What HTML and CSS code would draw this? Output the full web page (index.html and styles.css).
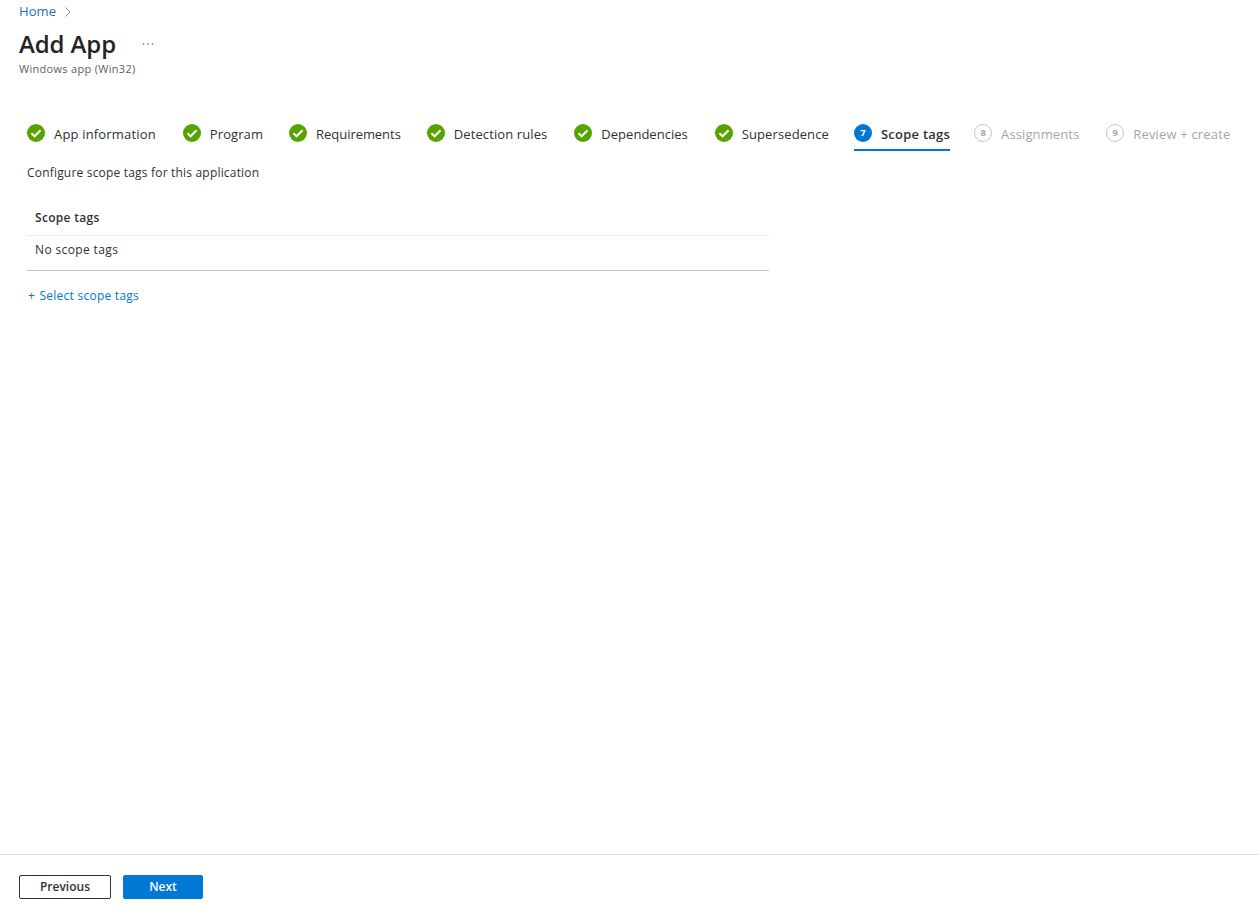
FILE: index.html
```html
<!DOCTYPE html>
<html lang="en">
<head>
<meta charset="utf-8">
<title>Add App</title>
<link rel="stylesheet" href="styles.css">
</head>
<body>
<div class="page">
  <header class="header">
    <nav class="crumbs"><a class="crumb-link">Home</a>
      <svg class="crumb-chevron" width="8" height="12" viewBox="0 0 8 12"><path d="M1.5 1.5 6 6l-4.5 4.5" fill="none" stroke="#8a8886" stroke-width="1"/></svg>
    </nav>
    <div class="title-row"><h1 class="title">Add App</h1><span class="more">
      <svg width="12" height="4" viewBox="0 0 12 4"><circle cx="1.5" cy="2" r=".8"/><circle cx="6" cy="2" r=".8"/><circle cx="10.5" cy="2" r=".8"/></svg></span></div>
    <div class="subtitle">Windows app (Win32)</div>
  </header>
  <ol class="steps">
    <li class="step"><svg class="check" viewBox="0 0 18 18"><circle cx="9" cy="9" r="9"/><path d="M4.5 9.3 7.6 12.3 13.5 6.2"/></svg><span>App information</span></li>
    <li class="step"><svg class="check" viewBox="0 0 18 18"><circle cx="9" cy="9" r="9"/><path d="M4.5 9.3 7.6 12.3 13.5 6.2"/></svg><span>Program</span></li>
    <li class="step"><svg class="check" viewBox="0 0 18 18"><circle cx="9" cy="9" r="9"/><path d="M4.5 9.3 7.6 12.3 13.5 6.2"/></svg><span>Requirements</span></li>
    <li class="step"><svg class="check" viewBox="0 0 18 18"><circle cx="9" cy="9" r="9"/><path d="M4.5 9.3 7.6 12.3 13.5 6.2"/></svg><span>Detection rules</span></li>
    <li class="step"><svg class="check" viewBox="0 0 18 18"><circle cx="9" cy="9" r="9"/><path d="M4.5 9.3 7.6 12.3 13.5 6.2"/></svg><span>Dependencies</span></li>
    <li class="step"><svg class="check" viewBox="0 0 18 18"><circle cx="9" cy="9" r="9"/><path d="M4.5 9.3 7.6 12.3 13.5 6.2"/></svg><span>Supersedence</span></li>
    <li class="step active"><i class="num">7</i><span>Scope tags</span></li>
    <li class="step todo"><i class="num">8</i><span>Assignments</span></li>
    <li class="step todo"><i class="num">9</i><span>Review + create</span></li>
  </ol>
  <main class="content">
    <p class="intro">Configure scope tags for this application</p>
    <div class="table">
      <div class="th">Scope tags</div>
      <div class="td">No scope tags</div>
    </div>
    <a class="add-link"><span class="plus">+</span> Select scope tags</a>
  </main>
  <footer class="footer">
    <button class="btn btn-secondary">Previous</button>
    <button class="btn btn-primary">Next</button>
  </footer>
</div>
</body>
</html>
```
FILE: styles.css
```css
* { box-sizing: border-box; }
html, body { margin: 0; padding: 0; }
body { font-family: "Open Sans", "Noto Sans", sans-serif; color: #323130; background: #fff; font-size: 12px; }
.page { height: 915px; display: flex; flex-direction: column; overflow: hidden; }
.header { padding: 0 19px; height: 121px; }
.crumbs { display: flex; align-items: center; gap: 8px; height: 22px; font-size: 13px; letter-spacing: .1px; }
.crumb-link { color: #1a6ec9; }
.crumb-chevron { margin-top: 1px; }
.title-row { display: flex; align-items: center; height: 40px; margin-top: 2px; }
.title { margin: 0; font-size: 24px; font-weight: 600; color: #252423; line-height: 40px; letter-spacing: -.1px; }
.more { margin-left: 26px; display: flex; fill: #605e5c; }
.subtitle { font-size: 11px; line-height: 11px; color: #605e5c; margin-top: -1px; letter-spacing: .3px; }
.steps { list-style: none; margin: 0; padding: 0 0 0 27px; display: flex; height: 30px; }
.step { display: flex; align-items: center; gap: 9px; height: 30px; font-size: 13px; color: #323130; white-space: nowrap; padding-bottom: 5px; margin-right: 26px; }
.step span { letter-spacing: .1px; }
.step:nth-child(1) { margin-right: 27px; }
.step:nth-child(1) span { letter-spacing: .17px; }
.step:nth-child(3) span { letter-spacing: -.05px; }
.step:nth-child(4) { margin-right: 27px; }
.step:nth-child(5) { margin-right: 27px; }
.step:nth-child(5) span { letter-spacing: .02px; }
.step:nth-child(6) { margin-right: 25px; }
.step:nth-child(7) { margin-right: 24px; }
.step:nth-child(8) { margin-right: 27px; }
.step:nth-child(9) span { letter-spacing: .17px; }
.check, .num { margin-bottom: 2px; }
.check { width: 18px; height: 18px; flex: none; }
.check circle { fill: #57a300; }
.check path { fill: none; stroke: #fff; stroke-width: 2; }
.num { width: 18px; height: 18px; flex: none; border-radius: 50%; font-style: normal; font-size: 9.5px; font-weight: 700; display: flex; align-items: center; justify-content: center; }
.active { border-bottom: 2px solid #0078d4; padding-bottom: 3px; }
.step.active span { font-weight: 600; letter-spacing: .25px; }
.active .num { background: #0078d4; color: #fff; }
.todo { color: #a6a6a6; }
.todo .num { border: 1px solid #c8c6c4; color: #a6a6a6; }
.content { flex: 1; padding: 13px 0 0 27px; }
.intro { margin: 0; font-size: 12px; line-height: 17px; color: #323130; letter-spacing: .19px; }
.table { width: 742px; margin-top: 20px; border-bottom: 1px solid #c8c6c4; }
.th { height: 35px; padding: 0 8px; font-weight: 600; line-height: 34px; border-bottom: 1px solid #edebe9; letter-spacing: .3px; }
.td { height: 34px; padding: 0 8px; line-height: 28px; letter-spacing: .37px; }
.add-link { display: block; margin-top: 16px; padding-left: 1px; color: #0078d4; line-height: 17px; letter-spacing: .25px; }
.plus { margin-right: 1px; }
.footer { height: 61px; border-top: 1px solid #e1dfdd; padding: 20px 19px 0; display: flex; gap: 12px; align-items: flex-start; }
.btn { height: 24px; border-radius: 2px; font: 600 12px "Open Sans", sans-serif; padding: 0 0 2px; }
.btn-secondary { width: 92px; background: #fff; border: 1px solid #323130; color: #323130; }
.btn-primary { width: 80px; background: #0078d4; border: 1px solid #0078d4; color: #fff; }
```
